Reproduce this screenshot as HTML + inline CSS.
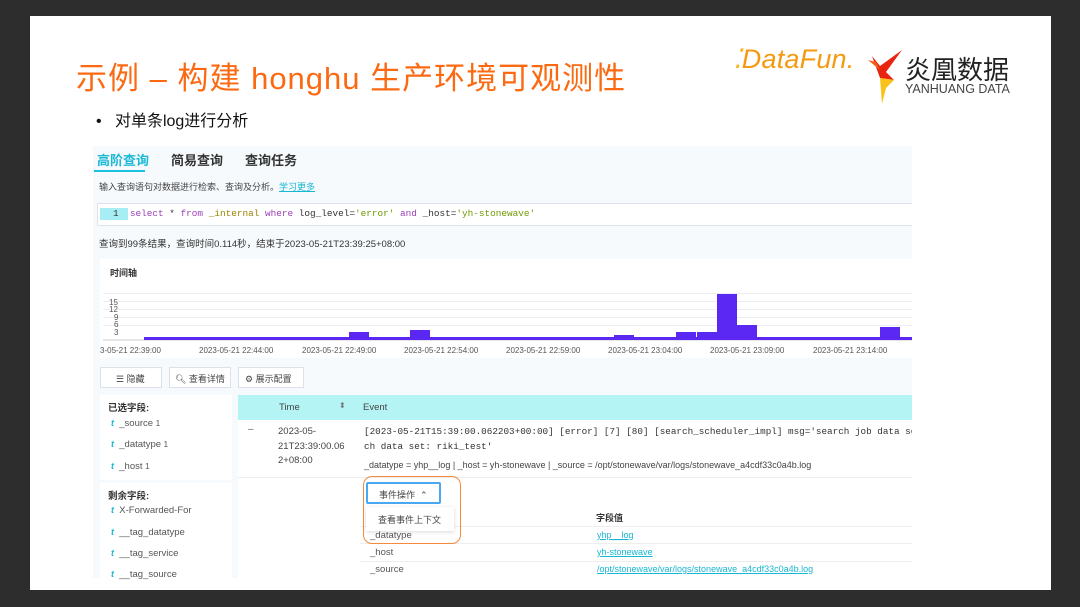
<!DOCTYPE html>
<html><head><meta charset="utf-8"><style>
*{margin:0;padding:0;box-sizing:border-box}
body{width:1080px;height:607px;background:#2d2d2d;position:relative;overflow:hidden;font-family:"Liberation Sans","Noto Sans CJK SC",sans-serif}
.a{position:absolute;white-space:nowrap}
.slide{position:absolute;left:30px;top:16px;width:1021px;height:574px;background:#fff}
.mono{font-family:"Liberation Mono","Noto Sans CJK SC",monospace}
.f{font-size:9.5px;color:#555}
.t{color:#19b8d6;font-style:italic;font-size:9px;font-weight:bold}
.lk{color:#18b7d4;text-decoration:underline;font-size:9px}
</style></head><body>
<div class="slide"></div>
<div class="a" style="left:76px;top:53px;font-size:31px;color:#fb6a12;letter-spacing:1px">示例 – 构建 honghu 生产环境可观测性</div>
<div class="a" style="left:733px;top:44px;font-size:27px;color:#f59a10;font-style:italic;letter-spacing:0.2px"><span style="color:#f7b420">⁚</span>DataFun.</div>
<svg class="a" style="left:866px;top:48px" width="40" height="58" viewBox="0 0 40 58"><path d="M6 8 L14 18 L36 2 L20 24 L28 32 L14 30 Z" fill="#e8230e"/><path d="M14 30 L28 32 L20 40 L16 56 Z" fill="#f8c21a"/><path d="M2 12 L10 14 L14 22 Z" fill="#f06018"/></svg>
<div class="a" style="left:905px;top:50px;font-size:26px;color:#222">炎凰数据</div>
<div class="a" style="left:905px;top:82px;font-size:12.5px;color:#444">YANHUANG DATA</div>
<div class="a" style="left:96px;top:107px;font-size:16px;color:#111">•&nbsp;&nbsp;&nbsp;对单条log进行分析</div>

<div class="a" style="left:93px;top:146px;width:819px;height:432px;background:#f6fafd"></div>
<div class="a" style="left:97px;top:150px;font-size:13px;font-weight:bold;color:#19b8d6">高阶查询</div>
<div class="a" style="left:94px;top:170px;width:51px;height:2px;background:#19c3dc"></div>
<div class="a" style="left:171px;top:150px;font-size:13px;font-weight:bold;color:#333">简易查询</div>
<div class="a" style="left:245px;top:150px;font-size:13px;font-weight:bold;color:#333">查询任务</div>
<div class="a" style="left:99px;top:180px;font-size:9px;color:#444">输入查询语句对数据进行检索、查询及分析。<span class="lk">学习更多</span></div>
<div class="a" style="left:97px;top:203px;width:815px;height:23px;background:#fff;border:1px solid #dde2ee;border-right:none"></div>
<div class="a" style="left:100px;top:208px;width:28px;height:12px;background:#a6eef4"></div>
<div class="a mono" style="left:113px;top:208px;font-size:9.4px;color:#333">1&nbsp;&nbsp;<span style="color:#9b3fb8">select</span> * <span style="color:#9b3fb8">from</span> <span style="color:#9a8200">_internal</span> <span style="color:#9b3fb8">where</span> log_level=<span style="color:#6e9a00">'error'</span> <span style="color:#9b3fb8">and</span> _host=<span style="color:#6e9a00">'yh-stonewave'</span></div>
<div class="a" style="left:99px;top:236px;font-size:9.5px;color:#333">查询到99条结果，查询时间0.114秒，结束于2023-05-21T23:39:25+08:00</div>

<div class="a" style="left:100px;top:259px;width:812px;height:99px;background:#fff"></div>
<div class="a" style="left:110px;top:266px;font-size:9px;font-weight:bold;color:#333">时间轴</div>
<svg class="a" style="left:100px;top:290px" width="812" height="68" viewBox="0 0 812 68">
<g stroke="#eceef4" stroke-width="1"><line x1="3" y1="3.5" x2="812" y2="3.5"/><line x1="3" y1="11.5" x2="812" y2="11.5"/><line x1="3" y1="19.5" x2="812" y2="19.5"/><line x1="3" y1="27.5" x2="812" y2="27.5"/><line x1="3" y1="35.5" x2="812" y2="35.5"/></g>
<line x1="3" y1="50" x2="812" y2="50" stroke="#ccc"/>
<g font-size="8" fill="#555" font-family="Liberation Sans"><text x="9" y="15">15</text><text x="9" y="22">12</text><text x="14" y="30">9</text><text x="14" y="37">6</text><text x="14" y="45">3</text>
<text x="0" y="63">3-05-21 22:39:00</text><text x="99" y="63">2023-05-21 22:44:00</text><text x="202" y="63">2023-05-21 22:49:00</text><text x="304" y="63">2023-05-21 22:54:00</text><text x="406" y="63">2023-05-21 22:59:00</text><text x="508" y="63">2023-05-21 23:04:00</text><text x="610" y="63">2023-05-21 23:09:00</text><text x="713" y="63">2023-05-21 23:14:00</text></g>
<g fill="#5a28f2"><rect x="44" y="47" width="768" height="3"/><rect x="249" y="42" width="20" height="8"/><rect x="310" y="40" width="20" height="10"/><rect x="514" y="45" width="20" height="5"/><rect x="576" y="42" width="20" height="8"/><rect x="597" y="42" width="20" height="8"/><rect x="617" y="4" width="20" height="46"/><rect x="637" y="35" width="20" height="15"/><rect x="780" y="37" width="20" height="13"/></g>
</svg>

<div class="a" style="left:100px;top:367px;width:62px;height:21px;background:#fff;border:1px solid #dde2ea;font-size:9px;color:#444;padding:4px 0 0 15px">☰ 隐藏</div>
<div class="a" style="left:169px;top:367px;width:62px;height:21px;background:#fff;border:1px solid #dde2ea;font-size:9px;color:#444;padding:4px 0 0 5px">🔍︎ 查看详情</div>
<div class="a" style="left:238px;top:367px;width:66px;height:21px;background:#fff;border:1px solid #dde2ea;font-size:9px;color:#444;padding:4px 0 0 6px">⚙ 展示配置</div>

<div class="a" style="left:100px;top:395px;width:132px;height:85px;background:#fff"></div>
<div class="a" style="left:100px;top:483px;width:132px;height:95px;background:#fff"></div>
<div class="a" style="left:108px;top:400px;font-size:9.5px;font-weight:bold;color:#333">已选字段:</div>
<div class="a f" style="left:111px;top:418px"><span class="t">t</span>&nbsp; _source <small>1</small></div>
<div class="a f" style="left:111px;top:439px"><span class="t">t</span>&nbsp; _datatype <small>1</small></div>
<div class="a f" style="left:111px;top:461px"><span class="t">t</span>&nbsp; _host <small>1</small></div>
<div class="a" style="left:108px;top:488px;font-size:9.5px;font-weight:bold;color:#333">剩余字段:</div>
<div class="a f" style="left:111px;top:505px"><span class="t">t</span>&nbsp; X-Forwarded-For</div>
<div class="a f" style="left:111px;top:527px"><span class="t">t</span>&nbsp; __tag_datatype</div>
<div class="a f" style="left:111px;top:548px"><span class="t">t</span>&nbsp; __tag_service</div>
<div class="a f" style="left:111px;top:569px"><span class="t">t</span>&nbsp; __tag_source</div>

<div class="a" style="left:238px;top:395px;width:674px;height:183px;background:#fff;overflow:hidden">
<div class="a" style="left:0;top:0;width:674px;height:25px;background:#b5f4f4"></div>
<div class="a" style="left:41px;top:7px;font-size:9.5px;color:#444">Time</div>
<div class="a" style="left:101px;top:6px;font-size:8px;color:#777">⬍</div>
<div class="a" style="left:125px;top:7px;font-size:9.5px;color:#444">Event</div>
<div class="a" style="left:10px;top:29px;font-size:10px;color:#666">–</div>
<div class="a" style="left:40px;top:30px;font-size:9.5px;color:#444;line-height:14.5px;white-space:normal;width:70px">2023-05-<br>21T23:39:00.06<br>2+08:00</div>
<div class="a mono" style="left:126px;top:30px;font-size:9.3px;color:#333;line-height:14.5px">[2023-05-21T15:39:00.062203+00:00] [error] [7] [80] [search_scheduler_impl] msg='search job data se<br>ch data set: riki_test'</div>
<div class="a" style="left:126px;top:65px;font-size:9px;color:#444">_datatype = yhp__log | _host = yh-stonewave | _source = /opt/stonewave/var/logs/stonewave_a4cdf33c0a4b.log</div>
<div class="a" style="left:0;top:82px;width:674px;height:1px;background:#eee"></div>
</div>
<div class="a" style="left:596px;top:511px;font-size:9px;font-weight:bold;color:#333">字段值</div>
<div class="a" style="left:360px;top:526px;width:552px;height:1px;background:#eee"></div>
<div class="a" style="left:360px;top:543px;width:552px;height:1px;background:#eee"></div>
<div class="a" style="left:360px;top:561px;width:552px;height:1px;background:#eee"></div>
<div class="a f" style="left:370px;top:530px">_datatype</div>
<div class="a f" style="left:370px;top:547px">_host</div>
<div class="a f" style="left:370px;top:564px">_source</div>
<div class="a lk" style="left:597px;top:530px">yhp__log</div>
<div class="a lk" style="left:597px;top:547px">yh-stonewave</div>
<div class="a lk" style="left:597px;top:564px">/opt/stonewave/var/logs/stonewave_a4cdf33c0a4b.log</div>

<div class="a" style="left:366px;top:507px;width:88px;height:24px;background:#fff;box-shadow:0 1px 4px rgba(0,0,0,.15)"></div>
<div class="a" style="left:378px;top:513px;font-size:9px;color:#444">查看事件上下文</div>
<div class="a" style="left:366px;top:482px;width:75px;height:22px;background:#fff;border:2px solid #4aa8f0;border-radius:2px;font-size:9px;color:#444;padding:4px 0 0 11px">事件操作 &nbsp;⌃</div>
<div class="a" style="left:363px;top:476px;width:98px;height:68px;border:1.5px solid #f58a3c;border-radius:9px"></div>
</body></html>
